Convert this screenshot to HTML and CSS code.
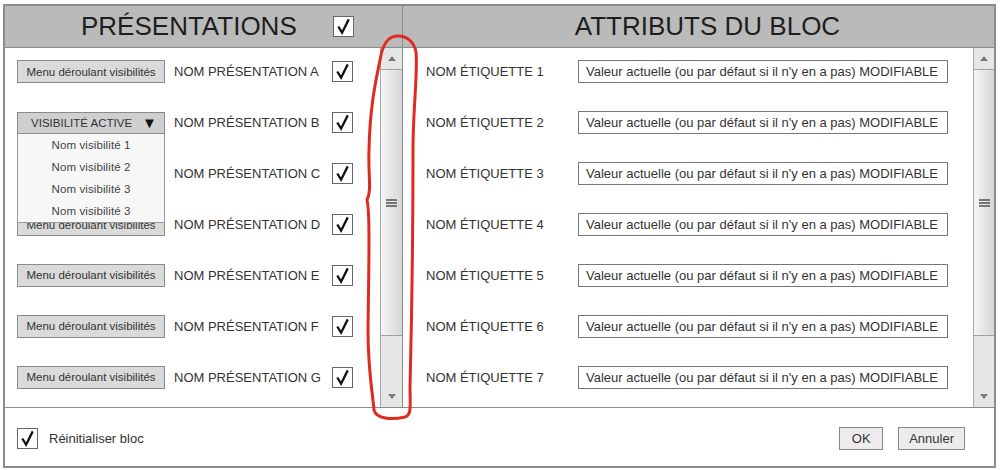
FILE: index.html
```html
<!DOCTYPE html>
<html lang="fr">

<head>
    <meta charset="UTF-8">
    <meta name="viewport" content="width=device-width, initial-scale=1.0">
    <title>Attributs du bloc</title>
    <link rel="stylesheet" href="styles.css">
</head>

<body>
    <div class="window">
        <div class="main">
            <!-- left panel : presentations -->
            <section class="panel panel-left">
                <div class="panel-head">
                    <h1 class="panel-title">PRÉSENTATIONS</h1>
                    <span class="check"><svg viewBox="0 0 20 20"><polyline points="4.5,10 8.5,16.5 15.5,2.5" /></svg></span>
                </div>
                <div class="panel-body">
                    <div class="rows">
                        <div class="row pres-row">
                            <button class="menu-btn">Menu déroulant visibilités</button>
                            <span class="row-label pres-label">NOM PRÉSENTATION A</span>
                            <span class="check"><svg viewBox="0 0 20 20"><polyline points="4.5,10 8.5,16.5 15.5,2.5" /></svg></span>
                        </div>
                        <div class="row pres-row">
                            <div class="dropdown">
                                <div class="dropdown-head">VISIBILITÉ ACTIVE <span class="caret">&#9660;</span></div>
                                <ul class="dropdown-list">
                                    <li>Nom visibilité 1</li>
                                    <li>Nom visibilité 2</li>
                                    <li>Nom visibilité 3</li>
                                    <li>Nom visibilité 3</li>
                                </ul>
                            </div>
                            <span class="row-label pres-label">NOM PRÉSENTATION B</span>
                            <span class="check"><svg viewBox="0 0 20 20"><polyline points="4.5,10 8.5,16.5 15.5,2.5" /></svg></span>
                        </div>
                        <div class="row pres-row">
                            <button class="menu-btn">Menu déroulant visibilités</button>
                            <span class="row-label pres-label">NOM PRÉSENTATION C</span>
                            <span class="check"><svg viewBox="0 0 20 20"><polyline points="4.5,10 8.5,16.5 15.5,2.5" /></svg></span>
                        </div>
                        <div class="row pres-row">
                            <button class="menu-btn">Menu déroulant visibilités</button>
                            <span class="row-label pres-label">NOM PRÉSENTATION D</span>
                            <span class="check"><svg viewBox="0 0 20 20"><polyline points="4.5,10 8.5,16.5 15.5,2.5" /></svg></span>
                        </div>
                        <div class="row pres-row">
                            <button class="menu-btn">Menu déroulant visibilités</button>
                            <span class="row-label pres-label">NOM PRÉSENTATION E</span>
                            <span class="check"><svg viewBox="0 0 20 20"><polyline points="4.5,10 8.5,16.5 15.5,2.5" /></svg></span>
                        </div>
                        <div class="row pres-row">
                            <button class="menu-btn">Menu déroulant visibilités</button>
                            <span class="row-label pres-label">NOM PRÉSENTATION F</span>
                            <span class="check"><svg viewBox="0 0 20 20"><polyline points="4.5,10 8.5,16.5 15.5,2.5" /></svg></span>
                        </div>
                        <div class="row pres-row">
                            <button class="menu-btn">Menu déroulant visibilités</button>
                            <span class="row-label pres-label">NOM PRÉSENTATION G</span>
                            <span class="check"><svg viewBox="0 0 20 20"><polyline points="4.5,10 8.5,16.5 15.5,2.5" /></svg></span>
                        </div>
                    </div>
                    <div class="scrollbar">
                        <div class="scroll-btn"><span class="arrow-up"></span></div>
                        <div class="scroll-track">
                            <div class="scroll-thumb"><span class="grip"></span></div>
                        </div>
                        <div class="scroll-btn"><span class="arrow-down"></span></div>
                    </div>
                </div>
            </section>

            <!-- right panel : block attributes -->
            <section class="panel panel-right">
                <div class="panel-head">
                    <h1 class="panel-title">ATTRIBUTS DU BLOC</h1>
                </div>
                <div class="panel-body">
                    <div class="rows">
                        <div class="row attr-row">
                            <span class="row-label attr-label">NOM ÉTIQUETTE 1</span>
                            <div class="value-box">Valeur actuelle (ou par défaut si il n'y en a pas) MODIFIABLE</div>
                        </div>
                        <div class="row attr-row">
                            <span class="row-label attr-label">NOM ÉTIQUETTE 2</span>
                            <div class="value-box">Valeur actuelle (ou par défaut si il n'y en a pas) MODIFIABLE</div>
                        </div>
                        <div class="row attr-row">
                            <span class="row-label attr-label">NOM ÉTIQUETTE 3</span>
                            <div class="value-box">Valeur actuelle (ou par défaut si il n'y en a pas) MODIFIABLE</div>
                        </div>
                        <div class="row attr-row">
                            <span class="row-label attr-label">NOM ÉTIQUETTE 4</span>
                            <div class="value-box">Valeur actuelle (ou par défaut si il n'y en a pas) MODIFIABLE</div>
                        </div>
                        <div class="row attr-row">
                            <span class="row-label attr-label">NOM ÉTIQUETTE 5</span>
                            <div class="value-box">Valeur actuelle (ou par défaut si il n'y en a pas) MODIFIABLE</div>
                        </div>
                        <div class="row attr-row">
                            <span class="row-label attr-label">NOM ÉTIQUETTE 6</span>
                            <div class="value-box">Valeur actuelle (ou par défaut si il n'y en a pas) MODIFIABLE</div>
                        </div>
                        <div class="row attr-row">
                            <span class="row-label attr-label">NOM ÉTIQUETTE 7</span>
                            <div class="value-box">Valeur actuelle (ou par défaut si il n'y en a pas) MODIFIABLE</div>
                        </div>
                    </div>
                    <div class="scrollbar">
                        <div class="scroll-btn"><span class="arrow-up"></span></div>
                        <div class="scroll-track">
                            <div class="scroll-thumb"><span class="grip"></span></div>
                        </div>
                        <div class="scroll-btn"><span class="arrow-down"></span></div>
                    </div>
                </div>
            </section>
        </div>

        <div class="footer">
            <span class="check"><svg viewBox="0 0 20 20"><polyline points="4.5,10 8.5,16.5 15.5,2.5" /></svg></span>
            <span class="footer-label">Réinitialiser bloc</span>
            <button class="dlg-btn btn-ok">OK</button>
            <button class="dlg-btn">Annuler</button>
        </div>
    </div>

    <!-- red marker circled around the presentations scrollbar -->
    <svg class="annotation" viewBox="0 0 1000 470">
        <path d="M398 36 C389 36 384 42 381 55 C377 76 370 102 369 150 C368 176 372 190 367 200 C370 212 369 255 368 330 C368 372 373 396 374 410 C376 419 392 420 405 417 C412 415 410 404 410 388 C411 348 413 250 413 150 C413 108 418 72 416 52 C414 41 406 36 398 36 Z" />
    </svg>
</body>

</html>
```

FILE: styles.css
```css
body {
    margin: 0;
    font-family: "Liberation Sans", Arial, sans-serif;
    background-color: #fff;
    color: #333;
}

.window {
    width: 993px;
    height: 464px;
    margin: 4px 0 0 3px;
    border: 2px solid #8c8c8c;
    box-sizing: border-box;
    display: flex;
    flex-direction: column;
    background-color: #fff;
}

.main {
    flex: 1;
    display: flex;
    min-height: 0;
}

.panel {
    display: flex;
    flex-direction: column;
}

.panel-left {
    width: 397px;
    border-right: 1px solid #8c8c8c;
}

.panel-right {
    flex: 1;
}

.panel-head {
    height: 41px;
    flex: none;
    display: flex;
    align-items: center;
    background-color: #bababa;
    border-bottom: 1px solid #8c8c8c;
}

.panel-left .panel-head {
    padding: 0 48px 0 76px;
}

.panel-left .panel-head .check {
    margin-left: auto;
}

.panel-right .panel-head {
    justify-content: center;
    padding-left: 18px;
}

.panel-title {
    margin: 0;
    font-size: 26px;
    font-weight: normal;
    color: #1e1e1e;
}

.panel-body {
    flex: 1;
    display: flex;
    min-height: 0;
}

.rows {
    flex: 1;
    display: flex;
    flex-direction: column;
    padding-bottom: 3px;
}

.row {
    flex: 1;
    display: flex;
    align-items: center;
    padding-bottom: 3px;
}

.pres-row {
    padding-left: 12px;
}

.attr-row {
    padding-left: 23px;
}

.row-label {
    font-size: 13px;
    color: #333;
    white-space: nowrap;
}

.pres-label {
    width: 149px;
    margin: 0 9px;
}

.attr-label {
    width: 152px;
}

/* checkbox with tick */
.check {
    width: 21px;
    height: 21px;
    flex: none;
    display: inline-flex;
    border: 1px solid #666;
    background-color: #fff;
    box-sizing: border-box;
}

.check svg {
    width: 19px;
    height: 19px;
}

.check polyline {
    fill: none;
    stroke: #111;
    stroke-width: 2.4;
}

.menu-btn {
    width: 148px;
    height: 23px;
    padding: 0;
    flex: none;
    font-family: inherit;
    font-size: 11.5px;
    color: #333;
    background-color: #dadada;
    border: 1px solid #8a8a8a;
    box-sizing: border-box;
}

/* opened visibility menu */
.dropdown {
    position: relative;
    width: 148px;
    flex: none;
    z-index: 2;
}

.dropdown-head {
    height: 22px;
    display: flex;
    align-items: center;
    justify-content: center;
    padding-left: 6px;
    font-size: 11.5px;
    color: #333;
    background-color: #cfcfcf;
    border: 1px solid #8a8a8a;
    box-sizing: border-box;
}

.caret {
    margin-left: 10px;
    font-size: 15px;
    color: #111;
}

.dropdown-list {
    position: absolute;
    top: 100%;
    left: 0;
    right: 0;
    margin: 0;
    padding: 0;
    list-style: none;
    background-color: #f7f7f7;
    border: 1px solid #9a9a9a;
    border-top: none;
}

.dropdown-list li {
    height: 22px;
    line-height: 22px;
    text-align: center;
    font-size: 11.5px;
    letter-spacing: 0.1px;
    color: #444;
}

.value-box {
    width: 370px;
    height: 23px;
    padding: 0 7px;
    box-sizing: border-box;
    display: flex;
    align-items: center;
    font-size: 13px;
    color: #333;
    white-space: nowrap;
    overflow: hidden;
    border: 1px solid #777;
    background-color: #fff;
}

/* scrollbars */
.scrollbar {
    width: 22px;
    flex: none;
    display: flex;
    flex-direction: column;
    background-color: #e6e6e6;
    border-left: 1px solid #a8a8a8;
    box-sizing: border-box;
}

.panel-right .scrollbar {
    width: 21px;
}

.scroll-btn {
    height: 21px;
    display: flex;
    align-items: center;
    justify-content: center;
}

.arrow-up,
.arrow-down {
    width: 0;
    height: 0;
    border-left: 4px solid transparent;
    border-right: 4px solid transparent;
}

.arrow-up {
    border-bottom: 5px solid #7a7a7a;
}

.arrow-down {
    border-top: 5px solid #7a7a7a;
}

.scroll-track {
    flex: 1;
}

.scroll-thumb {
    height: 267px;
    display: flex;
    align-items: center;
    justify-content: center;
    background: linear-gradient(to right, #f5f5f5, #d6d6d6);
    border-top: 1px solid #a0a0a0;
    border-bottom: 1px solid #a0a0a0;
    box-sizing: border-box;
}

.grip {
    width: 11px;
    height: 2px;
    background-color: #777;
    box-shadow: 0 3px 0 #777, 0 -3px 0 #777;
}

.footer {
    height: 59px;
    flex: none;
    display: flex;
    align-items: center;
    padding: 3px 29px 0 12px;
    border-top: 1px solid #8c8c8c;
    box-sizing: border-box;
}

.footer-label {
    margin-left: 11px;
    font-size: 13px;
    color: #333;
}

.dlg-btn {
    height: 23px;
    padding: 0 10px;
    font-family: inherit;
    font-size: 13px;
    color: #333;
    background-color: #ececec;
    border: 1px solid #888;
    box-sizing: border-box;
}

.btn-ok {
    width: 44px;
    margin-left: auto;
    margin-right: 15px;
}

.annotation {
    position: absolute;
    top: 0;
    left: 0;
    width: 1000px;
    height: 470px;
    pointer-events: none;
}

.annotation path {
    fill: none;
    stroke: #df2a20;
    stroke-width: 3;
    stroke-linecap: round;
}
```
